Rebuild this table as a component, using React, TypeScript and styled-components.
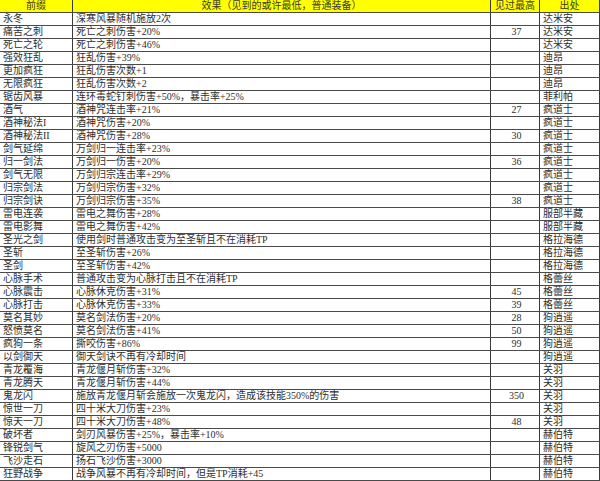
import React from "react";
import styled, { createGlobalStyle } from "styled-components";

const Global = createGlobalStyle`
  html, body { margin: 0; padding: 0; background: #ffffff; }
  body { font-family: "Liberation Serif", "Noto Sans CJK SC", serif; }
`;

const Sheet = styled.div`
  width: 600px;
  display: flex;
  flex-direction: column;
  background: #ffffff;
`;

const Row = styled.div<{ $header?: boolean }>`
  display: grid;
  grid-template-columns: 73px 418px 49px 60px;
  height: 13px;
  box-sizing: border-box;
  border-bottom: 1px solid #4a4a4a;
  background: ${(p) => (p.$header ? "#ffff00" : "#ffffff")};
`;

const Cell = styled.div<{ $align?: "left" | "center"; $last?: boolean }>`
  box-sizing: border-box;
  border-right: 1px solid #3a3a3a;
  padding: 0 ${(p) => (p.$align === "center" ? "0" : "2px")} 0 3px;
  font-family: "Liberation Serif", "Noto Sans CJK SC", serif;
  font-size: 10px;
  line-height: 12px;
  color: #2e2e2e;
  white-space: nowrap;
  overflow: hidden;
  text-align: ${(p) => (p.$align === "center" ? "center" : "left")};
`;

const HeadCell = styled(Cell)`
  padding: 0;
  text-align: center;
  color: #3a3a2a;
`;

type Entry = [string, string, string, string];

const rows: Entry[] = [
  ["永冬", "深寒风暴随机施放2次", "", "达米安"],
  ["痛苦之刺", "死亡之刺伤害+20%", "37", "达米安"],
  ["死亡之轮", "死亡之刺伤害+46%", "", "达米安"],
  ["强效狂乱", "狂乱伤害+39%", "", "迪昂"],
  ["更加疯狂", "狂乱伤害次数+1", "", "迪昂"],
  ["无限疯狂", "狂乱伤害次数+2", "", "迪昂"],
  ["锯齿风暴", "连环毒蛇钉刺伤害+50%，暴击率+25%", "", "菲利帕"],
  ["酒气", "酒神咒连击率+21%", "27", "疯道士"],
  ["酒神秘法I", "酒神咒伤害+20%", "", "疯道士"],
  ["酒神秘法II", "酒神咒伤害+28%", "30", "疯道士"],
  ["剑气延绵", "万剑归一连击率+23%", "", "疯道士"],
  ["归一剑法", "万剑归一伤害+20%", "36", "疯道士"],
  ["剑气无限", "万剑归宗连击率+29%", "", "疯道士"],
  ["归宗剑法", "万剑归宗伤害+32%", "", "疯道士"],
  ["归宗剑诀", "万剑归宗伤害+35%", "38", "疯道士"],
  ["雷电连袭", "雷电之舞伤害+28%", "", "服部半藏"],
  ["雷电影舞", "雷电之舞伤害+42%", "", "服部半藏"],
  ["圣光之剑", "使用剑时普通攻击变为至圣斩且不在消耗TP", "", "格拉海德"],
  ["圣斩", "至圣斩伤害+26%", "", "格拉海德"],
  ["圣剑", "至圣斩伤害+42%", "", "格拉海德"],
  ["心脉手术", "普通攻击变为心脉打击且不在消耗TP", "", "格蕾丝"],
  ["心脉震击", "心脉休克伤害+31%", "45", "格蕾丝"],
  ["心脉打击", "心脉休克伤害+33%", "39", "格蕾丝"],
  ["莫名其妙", "莫名剑法伤害+20%", "28", "狗逍遥"],
  ["怒愤莫名", "莫名剑法伤害+41%", "50", "狗逍遥"],
  ["疯狗一条", "撕咬伤害+86%", "99", "狗逍遥"],
  ["以剑御天", "御天剑诀不再有冷却时间", "", "狗逍遥"],
  ["青龙覆海", "青龙偃月斩伤害+32%", "", "关羽"],
  ["青龙腾天", "青龙偃月斩伤害+44%", "", "关羽"],
  ["鬼龙闪", "施放青龙偃月斩会施放一次鬼龙闪，造成该技能350%的伤害", "350", "关羽"],
  ["惊世一刀", "四十米大刀伤害+23%", "", "关羽"],
  ["惊天一刀", "四十米大刀伤害+48%", "48", "关羽"],
  ["破坏者", "剑刃风暴伤害+25%，暴击率+10%", "", "赫伯特"],
  ["锋锐剑气", "旋风之刃伤害+5000", "", "赫伯特"],
  ["飞沙走石", "扬石飞沙伤害+3000", "", "赫伯特"],
  ["狂野战争", "战争风暴不再有冷却时间，但是TP消耗+45", "", "赫伯特"],
];

export default function App() {
  return (
    <>
      <Global />
      <Sheet>
        <Row $header>
          <HeadCell>前缀</HeadCell>
          <HeadCell>效果（见到的或许最低，普通装备）</HeadCell>
          <HeadCell>见过最高</HeadCell>
          <HeadCell>出处</HeadCell>
        </Row>
        {rows.map(([prefix, effect, max, src]) => (
          <Row key={prefix}>
            <Cell>{prefix}</Cell>
            <Cell>{effect}</Cell>
            <Cell $align="center">{max}</Cell>
            <Cell>{src}</Cell>
          </Row>
        ))}
      </Sheet>
    </>
  );
}
